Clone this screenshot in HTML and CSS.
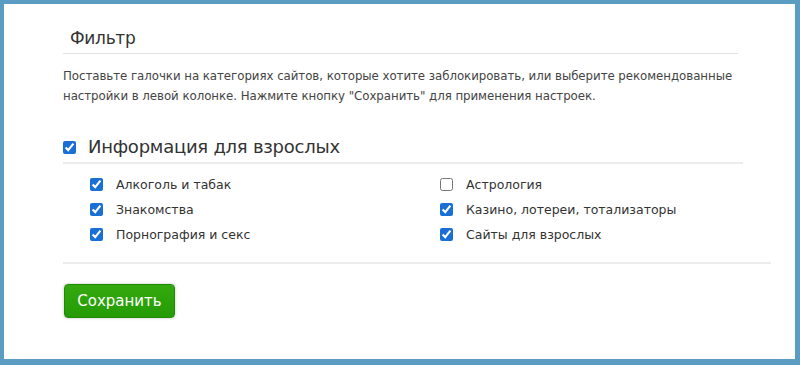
FILE: index.html
```html
<!DOCTYPE html>
<html lang="ru">
<head>
<meta charset="utf-8">
<link rel="stylesheet" href="styles.css">
</head>
<body>
<div class="frame">
  <div class="content">
    <h2 class="title">Фильтр</h2>
    <p class="intro">Поставьте галочки на категориях сайтов, которые хотите заблокировать, или выберите рекомендованные настройки в левой колонке. Нажмите кнопку "Сохранить" для применения настроек.</p>
    <div class="group">
      <label class="group-head"><input type="checkbox" checked><span>Информация для взрослых</span></label>
      <div class="items">
        <label class="item"><input type="checkbox" checked><span>Алкоголь и табак</span></label>
        <label class="item"><input type="checkbox"><span>Астрология</span></label>
        <label class="item"><input type="checkbox" checked><span>Знакомства</span></label>
        <label class="item"><input type="checkbox" checked><span>Казино, лотереи, тотализаторы</span></label>
        <label class="item"><input type="checkbox" checked><span>Порнография и секс</span></label>
        <label class="item"><input type="checkbox" checked><span>Сайты для взрослых</span></label>
      </div>
    </div>
    <div class="actions">
      <button class="save" type="button">Сохранить</button>
    </div>
  </div>
</div>
</body>
</html>
```
FILE: styles.css
```css
html, body {
  margin: 0;
  padding: 0;
  background: #ffffff;
}
.frame {
  width: 800px;
  height: 365px;
  box-sizing: border-box;
  border-style: solid;
  border-color: #5b9cc3;
  border-width: 4px 5px 6px 4px;
  background: #ffffff;
  font-family: "DejaVu Sans", Verdana, sans-serif;
  color: #333333;
}
.content {
  padding: 22px 0 0 59px;
}
.title {
  margin: 0;
  width: 668px;
  padding: 0 0 2px 7px;
  font-size: 17px;
  letter-spacing: -0.3px;
  font-weight: normal;
  line-height: 25px;
  color: #333333;
  border-bottom: 1px solid #e3e3e3;
}
.intro {
  margin: 12px 0 0 0;
  width: 690px;
  font-size: 11.8px;
  letter-spacing: -0.05px;
  line-height: 20px;
  color: #444444;
}
.group {
  margin-top: 28px;
}
.group-head {
  display: flex;
  align-items: center;
  width: 680px;
  border-bottom: 2px solid #ececec;
  padding-bottom: 2px;
}
.group-head input {
  margin: 0 12px 0 0;
  width: 13px;
  height: 13px;
  accent-color: #1a6fd6;
}
.group-head span {
  font-size: 18px;
  letter-spacing: -0.25px;
  line-height: 26px;
  color: #333333;
}
.items {
  display: grid;
  grid-template-columns: 350px 1fr;
  row-gap: 6px;
  padding: 11px 0 18px 27px;
  width: 681px;
  border-bottom: 2px solid #ececec;
}
.item {
  display: flex;
  align-items: center;
  font-size: 12.5px;
  line-height: 19px;
  color: #333333;
}
.item input {
  margin: 0 13px 0 0;
  width: 13px;
  height: 13px;
  accent-color: #1a6fd6;
}
.actions {
  padding-top: 20px;
}
.save {
  margin-left: 1px;
  width: 111px;
  height: 34px;
  border: 1px solid #1e8a06;
  border-radius: 4px;
  background: linear-gradient(#34a90f, #249b05);
  color: #ffffff;
  font-family: "DejaVu Sans", Verdana, sans-serif;
  font-size: 15px;
  box-shadow: 0 0 3px rgba(0, 0, 0, 0.25);
  padding: 0;
}
```
